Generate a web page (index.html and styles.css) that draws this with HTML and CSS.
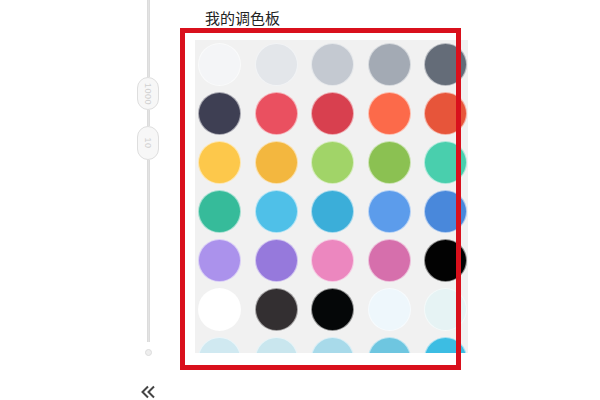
FILE: index.html
```html
<!DOCTYPE html>
<html lang="zh">
<head>
<meta charset="utf-8">
<link rel="stylesheet" href="styles.css">
</head>
<body>
<div class="page">
  <div class="slider">
    <div class="track t1"></div>
    <div class="pill p1"><span>1000</span></div>
    <div class="track t2"></div>
    <div class="pill p2"><span>10</span></div>
    <div class="track t3"></div>
    <div class="knob"></div>
    <div class="chev">
      <svg width="16" height="14" viewBox="0 0 16 14">
        <path d="M8 1.5 L2.5 7 L8 12.5 M14 1.5 L8.5 7 L14 12.5" fill="none" stroke="#444" stroke-width="2"/>
      </svg>
    </div>
  </div>
  <div class="main">
    <div class="title">我的调色板</div>
    <div class="frame">
      <div class="panel">
        <div class="dot" style="background:#f4f5f7"></div>
        <div class="dot" style="background:#e3e6ea"></div>
        <div class="dot" style="background:#c4c9d1"></div>
        <div class="dot" style="background:#a3aab4"></div>
        <div class="dot" style="background:#646c78"></div>

        <div class="dot" style="background:#3e3f53"></div>
        <div class="dot" style="background:#ea5060"></div>
        <div class="dot" style="background:#d8404f"></div>
        <div class="dot" style="background:#fc6a4a"></div>
        <div class="dot" style="background:#e7553a"></div>

        <div class="dot" style="background:#fdc84b"></div>
        <div class="dot" style="background:#f3b73f"></div>
        <div class="dot" style="background:#a1d468"></div>
        <div class="dot" style="background:#8bc152"></div>
        <div class="dot" style="background:#49cfad"></div>

        <div class="dot" style="background:#36bb9a"></div>
        <div class="dot" style="background:#4fc0e8"></div>
        <div class="dot" style="background:#3baed9"></div>
        <div class="dot" style="background:#5c9ceb"></div>
        <div class="dot" style="background:#4988db"></div>

        <div class="dot" style="background:#ab92ec"></div>
        <div class="dot" style="background:#9679dc"></div>
        <div class="dot" style="background:#ec87bf"></div>
        <div class="dot" style="background:#d66fac"></div>
        <div class="dot" style="background:#020202"></div>

        <div class="dot" style="background:#ffffff"></div>
        <div class="dot" style="background:#332f31"></div>
        <div class="dot" style="background:#050708"></div>
        <div class="dot" style="background:#eef7fc"></div>
        <div class="dot" style="background:#e6f3f4"></div>

        <div class="dot" style="background:#d0e9f1"></div>
        <div class="dot" style="background:#c9e6ee"></div>
        <div class="dot" style="background:#a8daea"></div>
        <div class="dot" style="background:#6ec6e0"></div>
        <div class="dot" style="background:#3cbde3"></div>
      </div>
    </div>
  </div>
</div>
</body>
</html>
```

FILE: styles.css
```css
html, body {
  margin: 0;
  padding: 0;
  background: #ffffff;
}

.page {
  display: flex;
  width: 600px;
  height: 400px;
  overflow: hidden;
}

.slider {
  width: 24px;
  margin-left: 136px;
  display: flex;
  flex-direction: column;
  align-items: center;
}

.track {
  width: 3px;
  background: #e3e3e3;
  border-left: 1px solid #dcdcdc;
  border-right: 1px solid #dcdcdc;
  box-sizing: border-box;
}

.t1 { height: 77px; }
.t2 { height: 16px; }
.t3 { height: 182px; }

.pill {
  width: 22px;
  box-sizing: border-box;
  border: 1.5px solid #dedede;
  background: #f7f7f7;
  border-radius: 11px;
  display: flex;
  align-items: center;
  justify-content: center;
}

.p1 { height: 33px; }
.p2 { height: 34px; }

.pill span {
  display: block;
  transform: rotate(90deg);
  font-family: "Liberation Sans", sans-serif;
  font-size: 9px;
  color: #d0d0d0;
  letter-spacing: 0.5px;
}

.knob {
  width: 7px;
  height: 7px;
  margin-top: 7px;
  border-radius: 50%;
  border: 1px solid #dcdcdc;
  background: #eeeeee;
  box-sizing: border-box;
}

.chev {
  margin-top: 29px;
  height: 14px;
  display: flex;
}

.main {
  margin-left: 20px;
  display: flex;
  flex-direction: column;
}

.title {
  height: 28px;
  padding-top: 8px;
  box-sizing: border-box;
  padding-left: 25px;
  font-family: "Noto Sans CJK SC", "Noto Sans", sans-serif;
  font-size: 15px;
  line-height: 20px;
  color: #222222;
}

.frame {
  position: relative;
  width: 281px;
  height: 342px;
  box-sizing: border-box;
  padding: 12px 0 0 15px;
}

.frame::after {
  content: "";
  position: absolute;
  inset: 0;
  border: 5px solid #d9101c;
  pointer-events: none;
}

.panel {
  width: 273px;
  height: 313px;
  overflow: hidden;
  background: #f1f1f1;
  box-sizing: border-box;
  padding: 3px 0 0 3px;
  display: grid;
  grid-template-columns: repeat(5, 43px);
  grid-auto-rows: 43px;
  column-gap: 13.5px;
  row-gap: 6px;
}

.dot {
  width: 43px;
  height: 43px;
  border-radius: 50%;
  box-sizing: border-box;
  border: 1.5px solid rgba(255, 255, 255, 0.55);
}
```
